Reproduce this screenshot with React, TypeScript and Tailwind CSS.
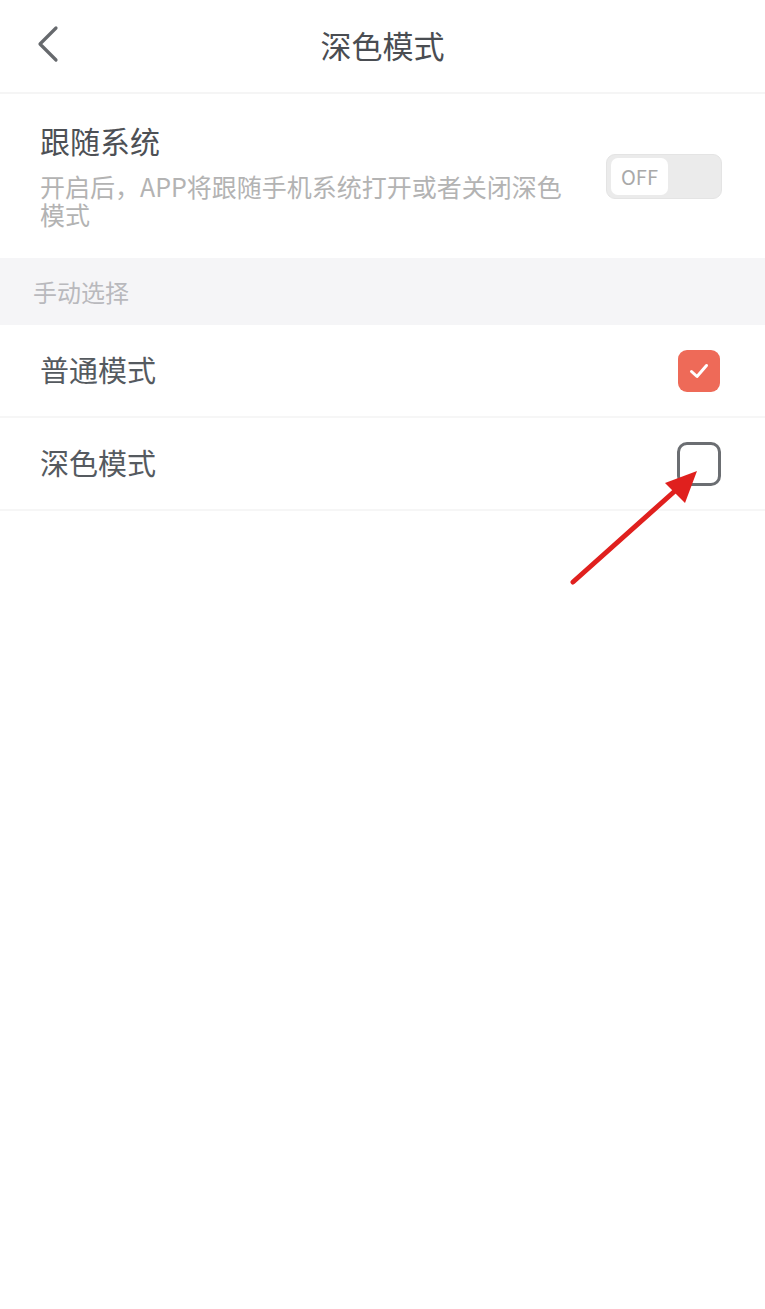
import React from "react";

const font = { fontFamily: '"Noto Sans CJK SC", "Noto Sans", sans-serif' };

function Check() {
  return (
    <div className="w-[42px] h-[42px] rounded-[9px] bg-[#ee6a58] flex items-center justify-center">
      <svg width="24" height="24" viewBox="0 0 24 24" fill="none">
        <path d="M4.5 12.5 L10 17.5 L19.5 6.5" stroke="#fff" strokeWidth="3" strokeLinecap="round" strokeLinejoin="round" />
      </svg>
    </div>
  );
}

function Empty() {
  return <div className="w-[44px] h-[44px] rounded-[10px] border-[3px] border-[#6b6e72] bg-white" />;
}

export default function App() {
  return (
    <div className="relative w-[765px] h-[1309px] bg-white text-[#555a5f]" style={font}>
      <div className="relative h-[94px] flex items-center justify-center border-b-2 border-[#f5f5f5]">
        <svg className="absolute left-[36px] top-[25px]" width="24" height="38" viewBox="0 0 24 38" fill="none">
          <path d="M20 3 L4 19 L20 35" stroke="#66696d" strokeWidth="3.2" strokeLinecap="round" strokeLinejoin="round" />
        </svg>
        <div className="text-[31px] leading-none text-[#4a4d52] -mt-[4px]">深色模式</div>
      </div>

      <div className="h-[164px] flex items-start justify-between pl-[40px] pr-[43px] pt-[26px]">
        <div className="w-[535px]">
          <div className="text-[30px] leading-[40px] text-[#4d5055]">跟随系统</div>
          <div className="text-[25px] leading-[28px] text-[#b3b3b3] mt-[12px]">
            开启后，APP将跟随手机系统打开或者关闭深色模式
          </div>
        </div>
        <div className="mt-[34px] w-[116px] h-[45px] rounded-[9px] bg-[#ebebeb] border border-[#e4e4e4] flex items-center pl-[4px]">
          <div className="w-[57px] h-[37px] rounded-[7px] bg-white flex items-center justify-center text-[20px] text-[#a9a9a9] leading-none">
            OFF
          </div>
        </div>
      </div>

      <div className="h-[67px] bg-[#f5f5f7] flex items-center pl-[33px] text-[24px] text-[#b9b9bd]">手动选择</div>

      <div className="h-[93px] flex items-center justify-between pl-[40px] pr-[45px] border-b-2 border-[#f6f6f6]">
        <div className="text-[29px] -mt-[1px]">普通模式</div>
        <Check />
      </div>
      <div className="h-[93px] flex items-center justify-between pl-[40px] pr-[44px] border-b-2 border-[#f6f6f6]">
        <div className="text-[29px] -mt-[1px]">深色模式</div>
        <Empty />
      </div>

      <svg className="absolute left-0 top-0 pointer-events-none" width="765" height="700" viewBox="0 0 765 700">
        <line x1="573" y1="582" x2="676" y2="490" stroke="#e0201e" strokeWidth="5" strokeLinecap="round" />
        <polygon points="697,471 665,483 685,503" fill="#e0201e" />
      </svg>
    </div>
  );
}
